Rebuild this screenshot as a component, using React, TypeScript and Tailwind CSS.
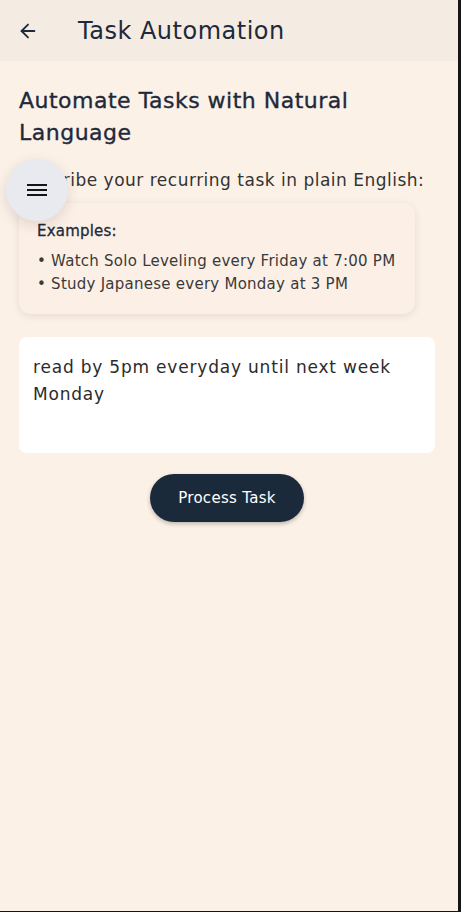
import { ArrowLeft } from 'lucide-react'

const font = { fontFamily: '"DejaVu Sans", "Noto Sans", sans-serif' }

function Hamburger() {
  return (
    <svg width="20" height="12" viewBox="0 0 20 12" fill="none" className="text-[#151515]">
      <path d="M0 1h20M0 6h20M0 11h20" stroke="currentColor" strokeWidth="2" />
    </svg>
  )
}

export default function App() {
  return (
    <div className="flex h-[912px] w-[461px] bg-[#151515]" style={font}>
      <div className="relative flex h-[911px] w-[458px] flex-col bg-[#fcf1e7]">
        {/* Top bar */}
        <header className="flex h-[61px] shrink-0 items-center bg-[#f4ece2] pl-[17px]">
          <ArrowLeft size={22} strokeWidth={2} className="text-[#1e293b]" />
          <h1 className="ml-[39px] text-[24px] font-normal tracking-[0.5px] text-[#1e293b]">Task Automation</h1>
        </header>

        <main className="flex flex-col px-[19px] pt-[24px]">
          <h2 className="text-[22px] font-normal leading-[32px] tracking-[0.5px] text-[#1e293b] [-webkit-text-stroke:0.35px_#1e293b]">
            Automate Tasks with Natural Language
          </h2>
          <p className="mt-[18px] text-[17px] leading-[26px] tracking-[0.5px] text-[#333]">
            Describe your recurring task in plain English:
          </p>

          <div className="mt-[10px] w-[396px] rounded-[12px] bg-[#fcf0e6] pb-[18px] pl-[18px] pr-[10px] pt-[16px] shadow-[0_2px_8px_rgba(0,0,0,0.09)]">
            <div className="text-[15px] leading-[24px] tracking-[0.2px] text-[#1e293b] [-webkit-text-stroke:0.3px_#1e293b]">Examples:</div>
            <ul className="mt-[7px] whitespace-nowrap text-[15px] leading-[23px] tracking-[0.25px] text-[#3a3a3a]">
              <li>• Watch Solo Leveling every Friday at 7:00 PM</li>
              <li>• Study Japanese every Monday at 3 PM</li>
            </ul>
          </div>

          <div className="mt-[23px] h-[116px] w-[416px] rounded-[8px] bg-white px-[14px] pt-[17px] text-[17px] leading-[27px] tracking-[0.8px] text-[#2b2b2b]">
            read by 5pm everyday until next week Monday
          </div>

          <div className="mt-[21px] flex w-[416px] justify-center">
            <button className="h-[48px] w-[154px] rounded-full bg-[#1b2a3a] text-[15px] tracking-[0.3px] text-white shadow-[0_2px_4px_rgba(0,0,0,0.25)]">
              Process Task
            </button>
          </div>
        </main>

        {/* Floating menu button */}
        <button className="absolute left-[6px] top-[159px] flex h-[62px] w-[62px] items-center justify-center rounded-full bg-[#e8eaef] shadow-[0_4px_14px_rgba(0,0,0,0.12)]">
          <Hamburger />
        </button>
      </div>
    </div>
  )
}
